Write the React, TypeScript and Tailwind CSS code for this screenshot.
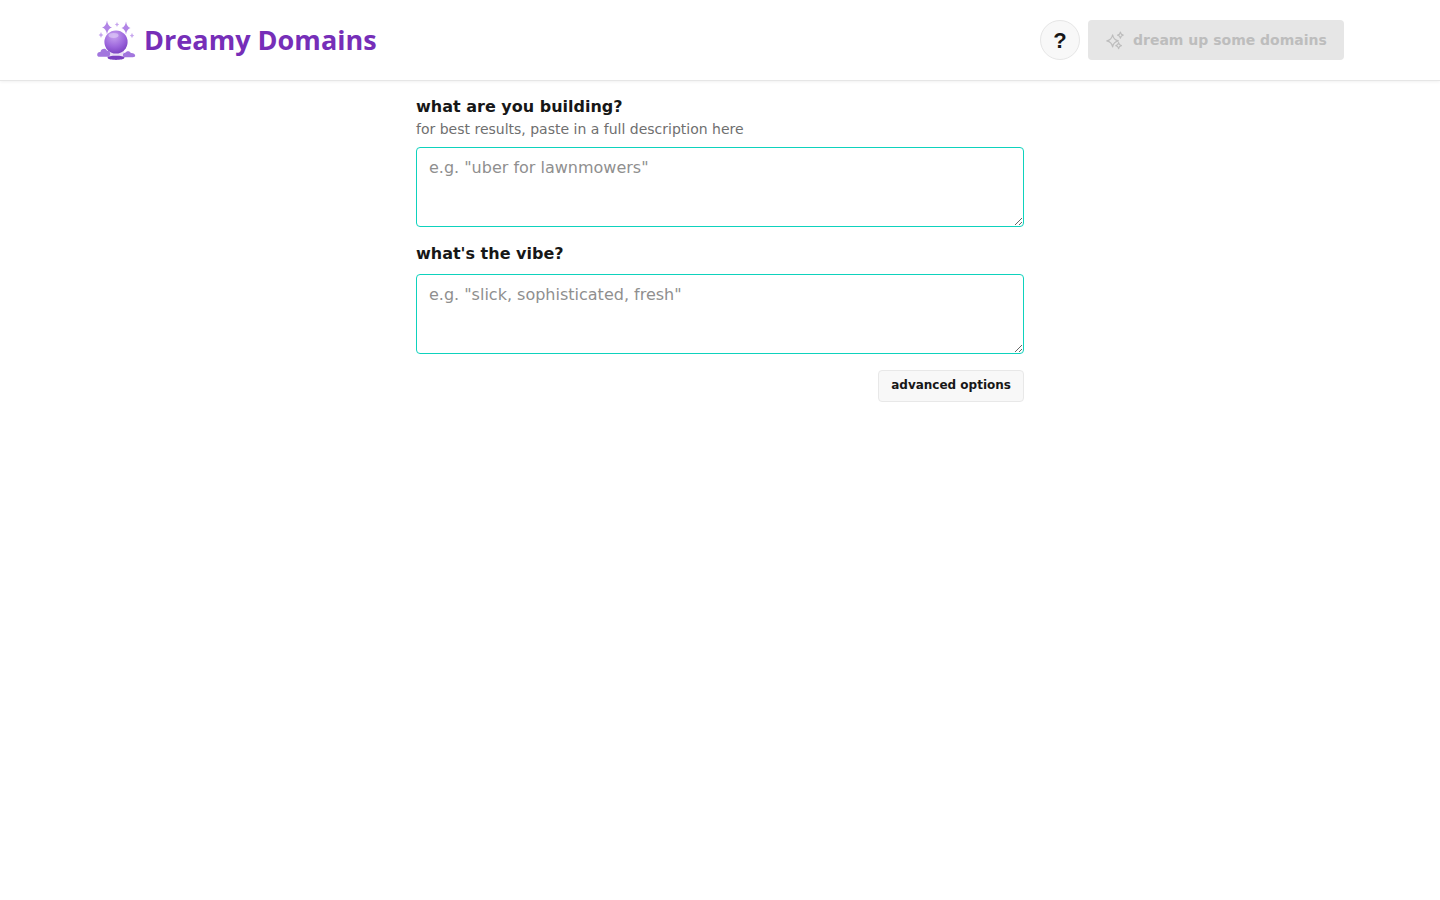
function star(x: number, y: number, w: number, h: number) {
  const cx = w * 0.16;
  const cy = h * 0.16;
  return `M${x} ${y - h} Q${x + cx} ${y - cy} ${x + w} ${y} Q${x + cx} ${y + cy} ${x} ${y + h} Q${x - cx} ${y + cy} ${x - w} ${y} Q${x - cx} ${y - cy} ${x} ${y - h}Z`;
}

function Logo() {
  return (
    <svg width="40" height="40" viewBox="0 0 40 40" className="shrink-0">
      <defs>
        <radialGradient id="ball" cx="0.42" cy="0.25" r="0.85">
          <stop offset="0" stopColor="#c8a2f0" />
          <stop offset="0.55" stopColor="#9c66dc" />
          <stop offset="1" stopColor="#7238ba" />
        </radialGradient>
      </defs>
      <path d={star(11, 7.5, 5, 7)} fill="#b184e6" />
      <path d={star(30, 8, 4.5, 6.5)} fill="#b184e6" />
      <path d={star(21, 4.5, 2.2, 2.6)} fill="#c6a5ee" />
      <path d={star(5, 15, 2.4, 3)} fill="#c6a5ee" />
      <path d={star(36, 15.5, 2.2, 2.8)} fill="#c6a5ee" />
      <path d="M12 31 L28 31 L29 37 L11 37 Z" fill="#e9dff6" />
      <circle cx="20" cy="22" r="11.6" fill="url(#ball)" />
      <ellipse cx="17.5" cy="15.5" rx="5" ry="2.4" fill="#dcc8f7" opacity="0.7" />
      <path d="M1.2 35 C1 32.6 3 31.6 4.4 32 C5 28.6 9.6 27.6 11 30.8 C13.2 30.6 14.8 32.8 14 35 C13.6 36.4 12.6 36.8 11.4 36.8 L3.4 36.8 C2 36.8 1.3 36.2 1.2 35 Z" fill="#a276de" />
      <path d="M27 35.6 C26.6 33.6 28.2 32.6 29.4 32.8 C30.4 30.6 34 30.8 34.8 33 C37 32.8 39.4 34 39.2 35.8 C39.1 36.8 38.2 37.2 37 37.2 L28.8 37.2 C27.8 37.2 27.2 36.6 27 35.6 Z" fill="#a276de" />
      <path d="M11.5 37.6 C11.5 35.2 28.5 35.2 28.5 37.6 C28.5 39.4 24 40 20 40 C16 40 11.5 39.4 11.5 37.6 Z" fill="#7a3fc0" />
    </svg>
  );
}

function SparkleIcon() {
  return (
    <svg width="20" height="20" viewBox="0 0 20 20" fill="none" stroke="currentColor" strokeWidth="1.2" strokeLinejoin="round" className="shrink-0">
      <path d={star(7.6, 10.8, 5.8, 6)} />
      <path d={star(15.4, 5.2, 2.8, 3)} />
      <path d={star(13.6, 15.6, 2.8, 3)} />
    </svg>
  );
}

function Field({ label, hint, placeholder }: { label: string; hint?: string; placeholder: string }) {
  return (
    <div className="flex flex-col">
      <label className="text-[16px] leading-[24px] font-bold text-[#171717]">{label}</label>
      {hint && <p className="text-[14px] leading-[20px] text-[#6f6f6f]">{hint}</p>}
      <textarea
        placeholder={placeholder}
        className="mt-2 block w-full h-[80px] rounded-[4px] border border-[#0ed2bd] bg-white px-3 py-2 text-[16px] leading-[24px] text-[#171717] placeholder:text-[#8f8f8f] outline-none"
      />
    </div>
  );
}

export default function App() {
  return (
    <div className="min-h-[900px] bg-white font-['DejaVu_Sans',sans-serif]">
      <header className="h-[81px] border-b border-[#e6e6e6] shadow-[0_1px_3px_rgba(0,0,0,0.06)] px-[96px] flex items-center justify-between">
        <div className="flex items-center gap-2">
          <Logo />
          <h1 className="font-['Open_Sans',sans-serif] text-[27px] leading-[40px] font-bold text-[#762eb8] tracking-[0.03px]">
            Dreamy Domains
          </h1>
        </div>
        <div className="flex items-center gap-2">
          <button className="w-10 h-10 rounded-full border border-[#e6e6e6] bg-[#f8f8f8] text-[#171717] font-['Liberation_Sans',sans-serif] text-[22px] font-bold flex items-center justify-center">
            ?
          </button>
          <button
            disabled
            className="h-10 w-[256px] rounded-[4px] bg-[#e6e6e6] text-[#bdbdbd] text-[14px] font-bold flex items-center pl-[17px] gap-2"
          >
            <SparkleIcon />
            dream up some domains
          </button>
        </div>
      </header>
      <main className="w-[608px] mx-auto pt-[14px] flex flex-col">
        <Field
          label="what are you building?"
          hint="for best results, paste in a full description here"
          placeholder={'e.g. "uber for lawnmowers"'}
        />
        <div className="mt-[15px]">
          <Field label="what's the vibe?" placeholder={'e.g. "slick, sophisticated, fresh"'} />
        </div>
        <div className="mt-4 flex justify-end">
          <button className="h-8 px-3 pb-[2px] rounded-[4px] border border-[#e8e8e8] bg-[#f8f8f8] text-[#171717] text-[12px] font-bold">
            advanced options
          </button>
        </div>
      </main>
    </div>
  );
}
